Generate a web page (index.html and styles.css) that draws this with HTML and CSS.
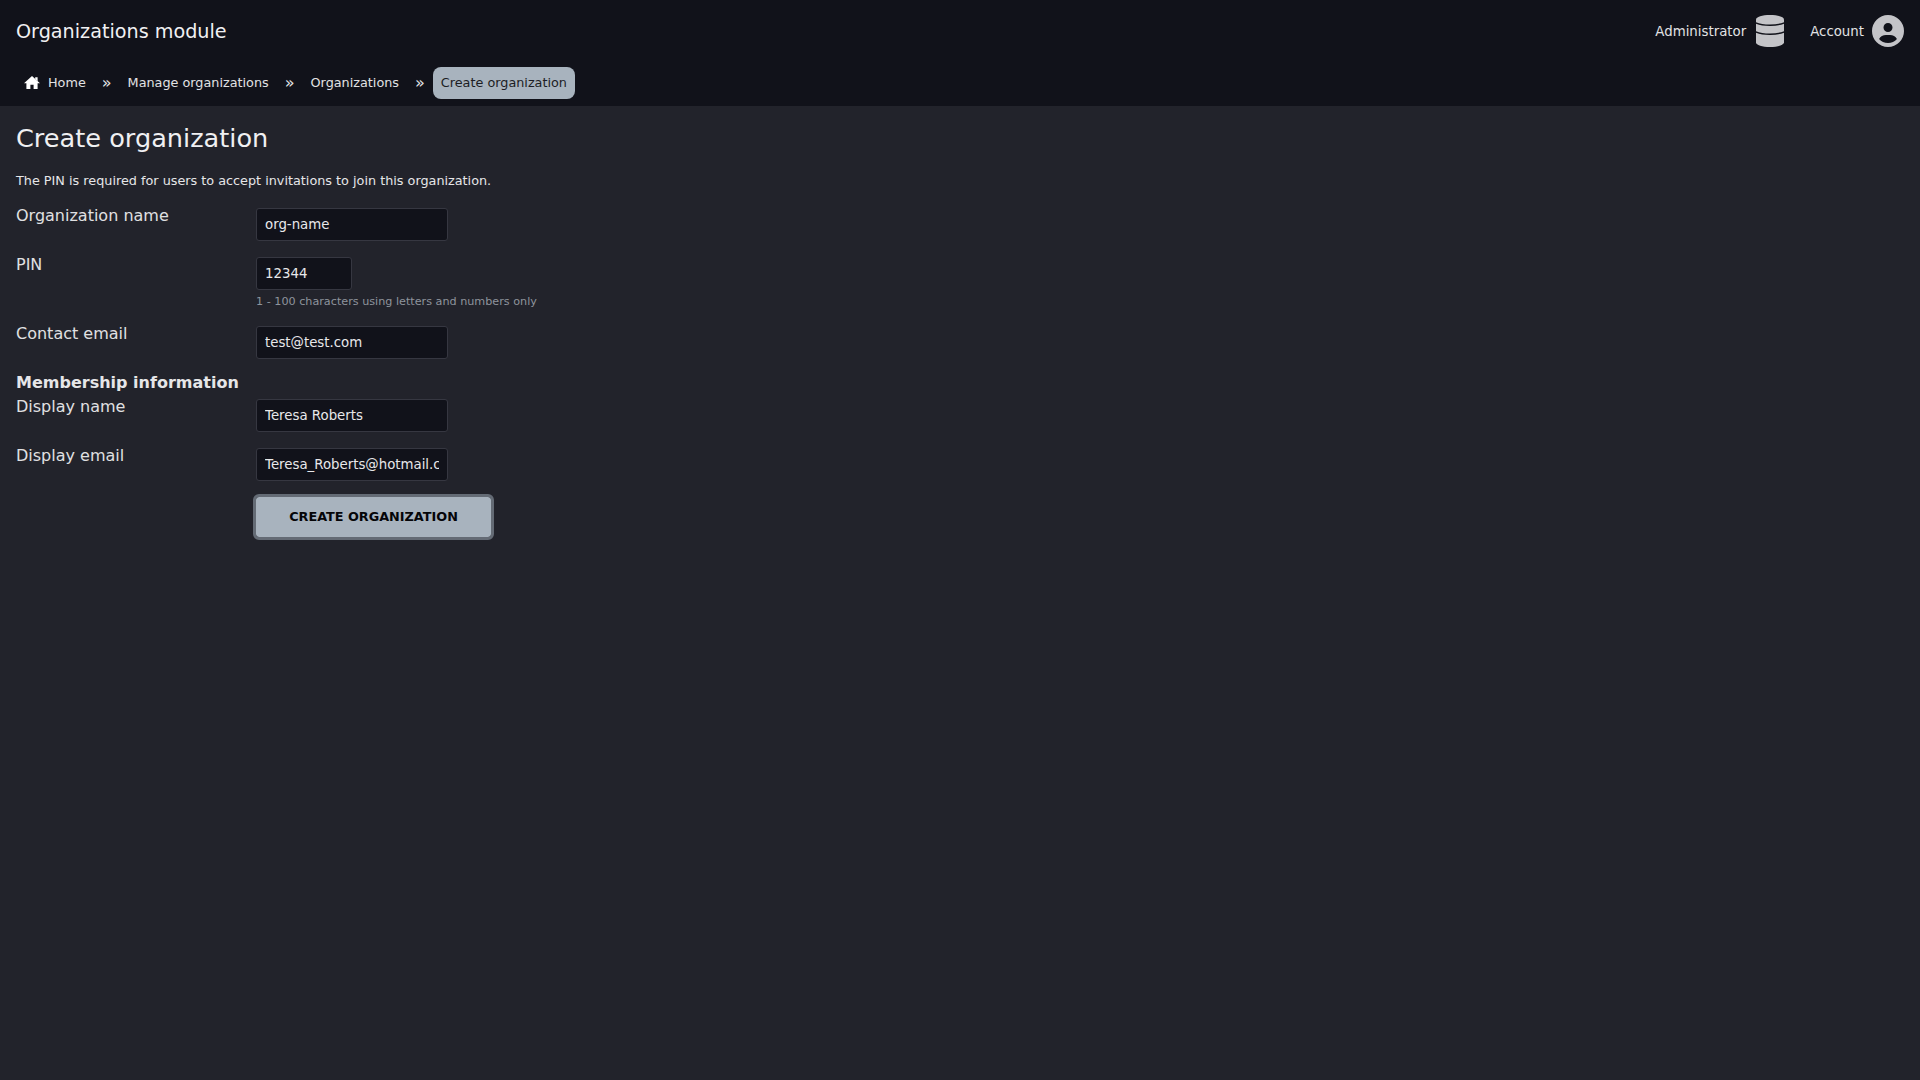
FILE: index.html
```html
<!DOCTYPE html>
<html lang="en">
<head>
<meta charset="utf-8">
<title>Create organization</title>
<link rel="stylesheet" href="styles.css">
</head>
<body>
<header class="header">
  <div class="topbar">
    <div class="app-title">Organizations module</div>
    <div class="top-actions">
      <div class="top-action top-action-admin">
        <span>Administrator</span>
        <svg class="icon-db" viewBox="0 0 28 32"><path fill="currentColor" d="M0 4.500C0 2 6.300 0 14 0s14 2 14 4.500v23c0 2.500-6.300 4.500-14 4.500S0 30 0 27.500z"/><path class="db-line" d="M-1 7.500C3 9.400 8 10.200 14 10.200s11-.8 15-2.700M-1 16.500C3 18.400 8 19.200 14 19.200s11-.8 15-2.700"/></svg>
      </div>
      <div class="top-action">
        <span>Account</span>
        <svg class="icon-user" viewBox="0 0 512 512"><path fill="currentColor" d="M399 384.200C376.900 345.800 335.400 320 288 320H224c-47.400 0-88.900 25.800-111 64.200c35.200 39.200 86.200 63.800 143 63.800s107.800-24.700 143-63.800zM0 256a256 256 0 1 1 512 0A256 256 0 1 1 0 256zm256 16a72 72 0 1 0 0-144 72 72 0 1 0 0 144z"/></svg>
      </div>
    </div>
  </div>
  <nav class="crumbs">
    <a class="crumb"><svg class="icon-home" viewBox="2 3 20 17"><path fill="currentColor" d="M10 20v-6h4v6h5v-8h3L12 3 2 12h3v8z"/><path fill="currentColor" d="M16 4.500h3v5l-3-2.700z"/></svg>Home</a>
    <span class="sep">»</span>
    <a class="crumb">Manage organizations</a>
    <span class="sep">»</span>
    <a class="crumb">Organizations</a>
    <span class="sep">»</span>
    <a class="crumb crumb-active">Create organization</a>
  </nav>
</header>
<main class="content">
  <h1 class="page-title">Create organization</h1>
  <p class="help">The PIN is required for users to accept invitations to join this organization.</p>
  <form class="form">
    <div class="row">
      <label class="label">Organization name</label>
      <div class="field"><input class="input" type="text" value="org-name"></div>
    </div>
    <div class="row">
      <label class="label">PIN</label>
      <div class="field">
        <input class="input input-short" type="text" value="12344">
        <div class="hint">1 - 100 characters using letters and numbers only</div>
      </div>
    </div>
    <div class="row">
      <label class="label">Contact email</label>
      <div class="field"><input class="input" type="text" value="test@test.com"></div>
    </div>
    <div class="section">Membership information</div>
    <div class="row">
      <label class="label">Display name</label>
      <div class="field"><input class="input" type="text" value="Teresa Roberts"></div>
    </div>
    <div class="row">
      <label class="label">Display email</label>
      <div class="field"><input class="input" type="text" value="Teresa_Roberts@hotmail.com"></div>
    </div>
    <div class="row row-submit">
      <div class="label"></div>
      <div class="field"><button class="submit" type="button">CREATE ORGANIZATION</button></div>
    </div>
  </form>
</main>
</body>
</html>
```

FILE: styles.css
```css
* { box-sizing: border-box; }
html, body { height: 100%; }
body {
  margin: 0;
  background: #22232b;
  color: #e6e6e8;
  font-family: "DejaVu Sans", sans-serif;
  font-size: 16px;
}
.header {
  height: 106px;
  background: #11121a;
  padding: 0 16px;
}
.topbar {
  height: 62px;
  display: flex;
  align-items: center;
  justify-content: space-between;
}
.app-title { font-size: 19.2px; color: #f0f0f2; }
.top-actions { display: flex; align-items: center; gap: 26px; }
.top-action {
  display: flex;
  align-items: center;
  gap: 8px;
  font-size: 13.33px;
  color: #e2e2e4;
}
.top-action-admin { gap: 10px; }
.icon-db { width: 28px; height: 32px; color: #c4c4c8; display: block; }
.db-line { fill: none; stroke: #11121a; stroke-width: 1.5; }
.icon-user { width: 32px; height: 32px; color: #c4c4c8; display: block; }
.crumbs {
  display: flex;
  align-items: center;
  height: 32px;
  margin-top: 5px;
  font-size: 12.8px;
  color: #e2e2e4;
}
.crumb {
  display: flex;
  align-items: center;
  height: 32px;
  padding: 0 8px 1px;
  border-radius: 8px;
}
.icon-home { width: 16px; height: 13.6px; color: #fff; margin-right: 8px; }
.sep { margin: 0 8px; padding-bottom: 2px; font-size: 16px; }
.crumb-active { background: #a8b3be; color: #1c1d24; }
.content { padding: 0 16px; }
.page-title {
  margin: 0;
  padding-top: 17px;
  font-size: 25.6px;
  font-weight: 400;
  line-height: 30px;
  color: #f0f0f2;
}
.help {
  margin: 20px 0 0;
  font-size: 12.8px;
  line-height: 16px;
  color: #e6e6e8;
}
.form { margin-top: 19px; }
.row { display: flex; align-items: flex-start; margin-bottom: 16px; }
.label {
  width: 240px;
  flex: none;
  font-size: 16px;
  line-height: 15px;
  color: #e0e0e2;
}
.input {
  display: block;
  width: 192px;
  height: 33px;
  padding: 0 8px;
  background: #11121a;
  border: 1px solid #363741;
  border-radius: 3px;
  color: #e8e8ea;
  font-family: "DejaVu Sans", sans-serif;
  font-size: 13.33px;
  outline: none;
}
.input-short { width: 96px; }
.hint {
  margin-top: 4px;
  font-size: 11.2px;
  line-height: 16px;
  color: #8e939c;
}
.section {
  font-size: 16px;
  font-weight: 700;
  line-height: 16px;
  margin-bottom: 8px;
  color: #e6e6e8;
}
.submit {
  display: block;
  width: 235px;
  height: 40px;
  padding: 0 0 1px;
  background: #a8b3be;
  color: #050508;
  border: none;
  border-radius: 3px;
  outline: 3px solid #646b75;
  font-family: "DejaVu Sans", sans-serif;
  font-size: 12.8px;
  font-weight: 700;
}
```
